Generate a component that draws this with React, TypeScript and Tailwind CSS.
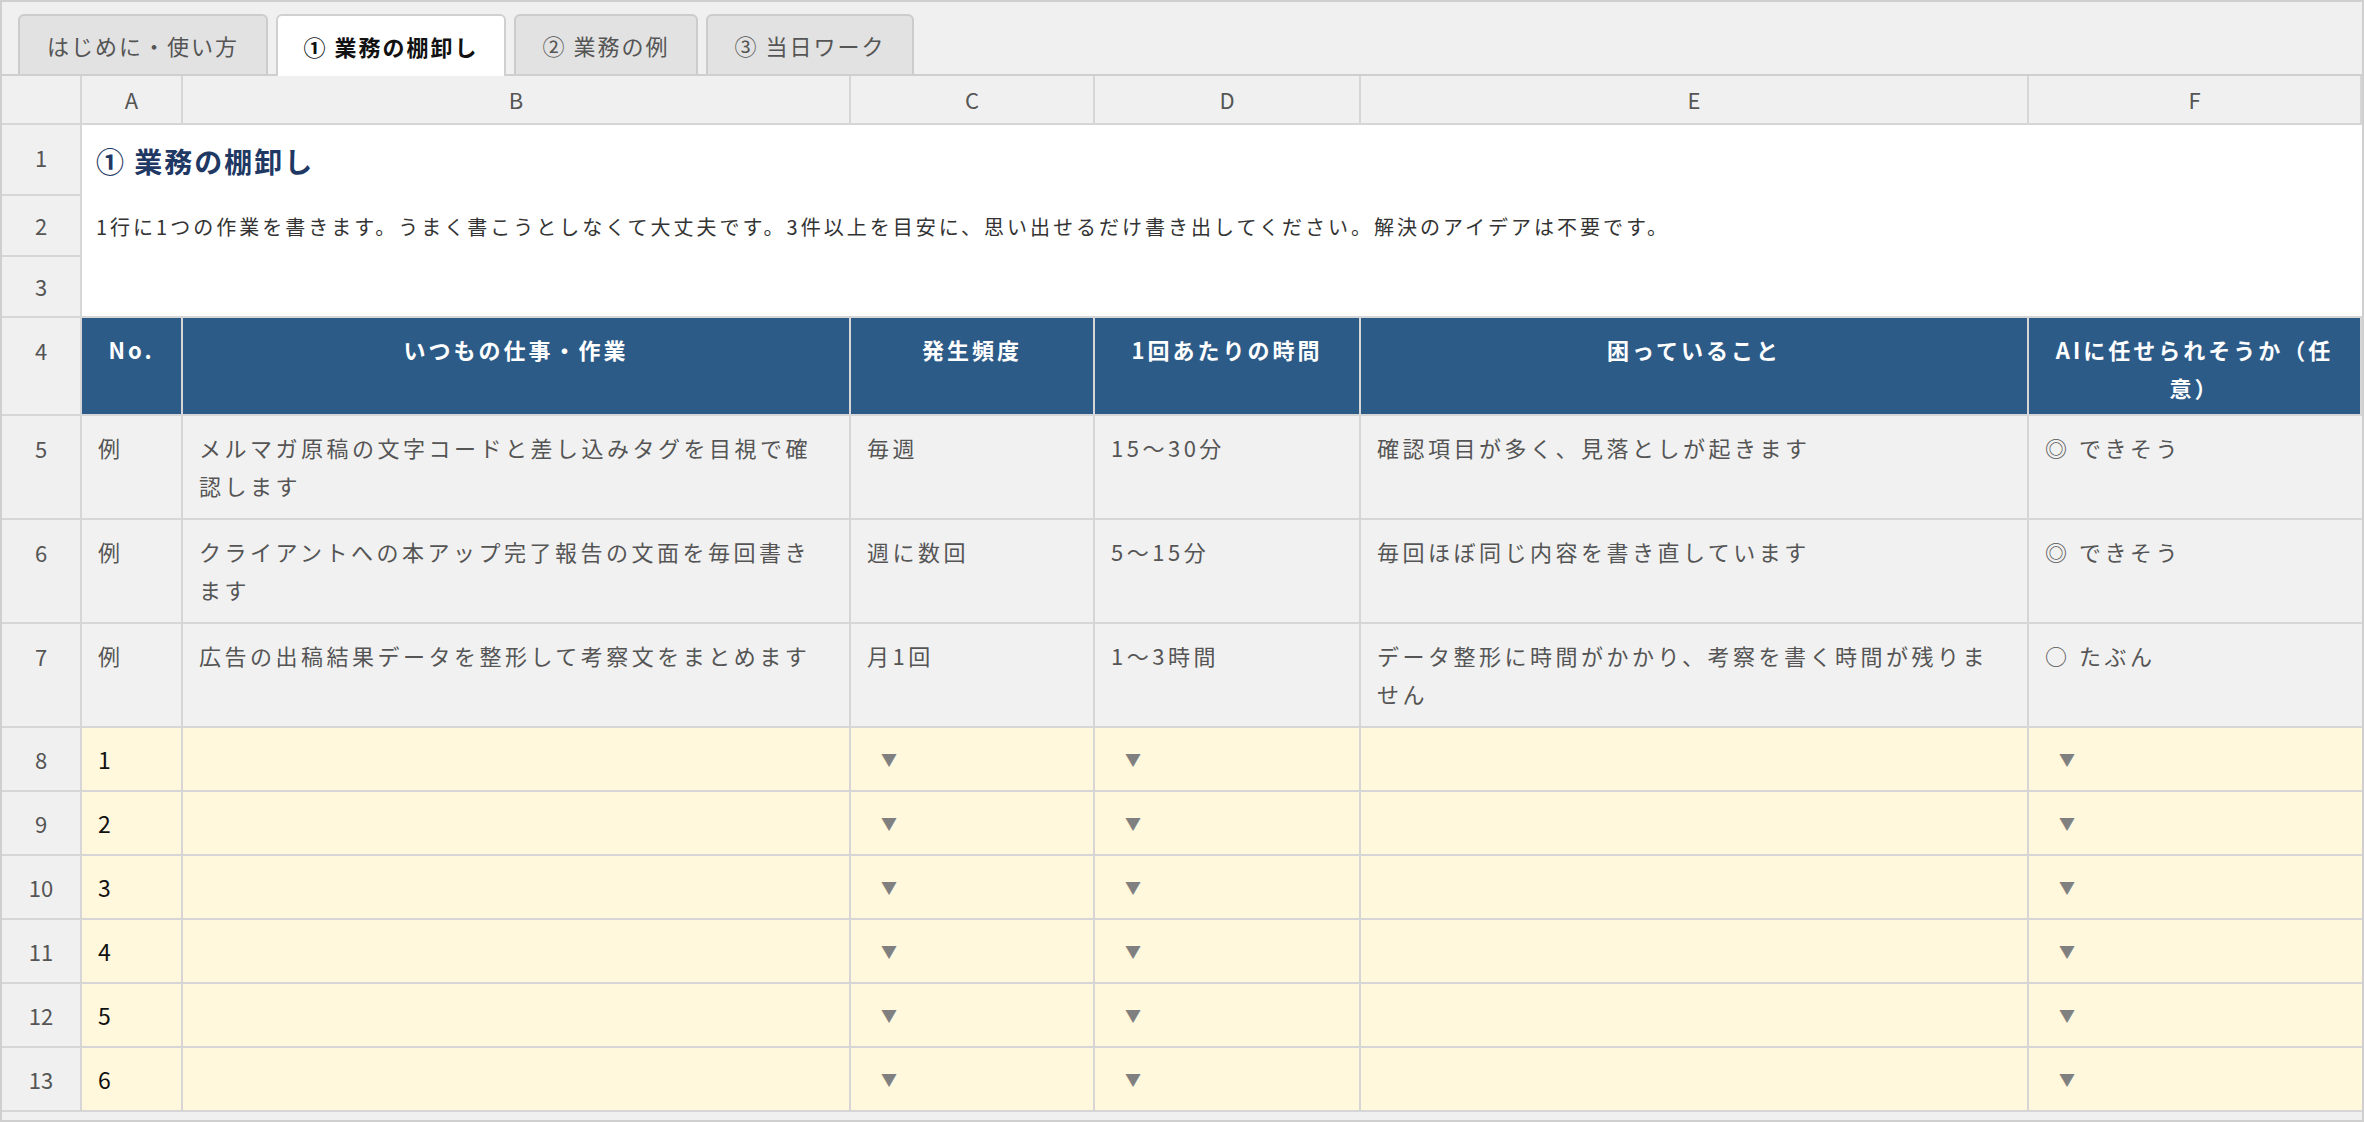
import React from 'react';

const cols = 'grid-cols-[80px_101px_668px_244px_266px_668px_1fr]';
const font = { fontFamily: '"Noto Sans CJK JP", "Noto Sans", sans-serif' };

const tabs = ['はじめに・使い方', '① 業務の棚卸し', '② 業務の例', '③ 当日ワーク'];
const tabWidths = ['w-[250px]', 'w-[230px]', 'w-[184px]', 'w-[208px]'];

const examples = [
  ['5', 'メルマガ原稿の文字コードと差し込みタグを目視で確認します', '毎週', '15〜30分', '確認項目が多く、見落としが起きます', '◎ できそう'],
  ['6', 'クライアントへの本アップ完了報告の文面を毎回書きます', '週に数回', '5〜15分', '毎回ほぼ同じ内容を書き直しています', '◎ できそう'],
  ['7', '広告の出稿結果データを整形して考察文をまとめます', '月1回', '1〜3時間', 'データ整形に時間がかかり、考察を書く時間が残りません', '○ たぶん'],
];

const RowHead: React.FC<{ n: string; h: string; top?: boolean }> = ({ n, h, top }) => (
  <div className={`${h} bg-[#f0f0f0] border-r-2 border-b-2 border-[#d6d6d6] flex justify-center text-[22px] text-[#555] ${top ? 'pt-[16px]' : 'items-center'}`}>{n}</div>
);

const Drop = () => <span className="text-[16px] text-[#808080]">▼</span>;

export default function App() {
  return (
    <div className="w-[2364px] h-[1122px] bg-[#f0f0f0] border-2 border-[#cfcfcf] overflow-hidden" style={font}>
      <div className="flex items-end gap-[8px] pl-[16px] pt-[13px] h-[74px] border-b-2 border-[#cfcfcf]">
        {tabs.map((t, i) => (
          <div
            key={t}
            className={`${tabWidths[i]} h-[60px] flex items-center justify-center rounded-t-[6px] border-2 border-b-0 text-[22px] tracking-[2px] ${
              i === 1 ? 'bg-white border-[#d0d0d0] font-bold text-[#111] -mb-[2px] h-[62px]' : 'bg-[#e2e2e2] border-[#cccccc] text-[#555]'
            }`}
          >
            {t}
          </div>
        ))}
      </div>

      <div className={`grid ${cols}`}>
        {/* column letters */}
        <div className="h-[49px] bg-[#f0f0f0] border-r-2 border-b-2 border-[#d6d6d6]" />
        {['A', 'B', 'C', 'D', 'E', 'F'].map(c => (
          <div key={c} className="h-[49px] bg-[#f0f0f0] border-r-2 border-b-2 border-[#d6d6d6] flex items-center justify-center text-[22px] text-[#555]">{c}</div>
        ))}

        {/* rows 1-3 */}
        <RowHead n="1" h="h-[71px]" top />
        <div className="col-span-6 row-span-3 bg-white border-b-2 border-[#d6d6d6] pl-[14px]">
          <div className="h-[71px] flex items-center text-[28px] tracking-[2px] font-bold text-[#1f3864]">① 業務の棚卸し</div>
          <div className="h-[61px] flex items-center text-[20px] tracking-[3px] text-[#333]">
            1行に1つの作業を書きます。うまく書こうとしなくて大丈夫です。3件以上を目安に、思い出せるだけ書き出してください。解決のアイデアは不要です。
          </div>
        </div>
        <RowHead n="2" h="h-[61px]" />
        <RowHead n="3" h="h-[61px]" />

        {/* header row */}
        <RowHead n="4" h="h-[98px]" top />
        {['No.', 'いつもの仕事・作業', '発生頻度', '1回あたりの時間', '困っていること', 'AIに任せられそうか（任意）'].map(h => (
          <div key={h} className="h-[98px] bg-[#2d5b88] border-r-2 border-b-2 border-[#d6d6d6] text-white font-bold text-[22px] tracking-[3px] leading-[38px] text-center px-[14px] pt-[12px]">{h}</div>
        ))}

        {/* example rows */}
        {examples.map(r => (
          <React.Fragment key={r[0]}>
            <RowHead n={r[0]} h="h-[104px]" top />
            {['例', ...r.slice(1)].map((c, i) => (
              <div key={i} className={`h-[104px] bg-[#f1f1f1] border-b-2 border-[#d6d6d6] px-[16px] pt-[12px] text-[22px] tracking-[3.5px] leading-[38px] text-[#555] ${i < 5 ? 'border-r-2' : ''}`}>{c}</div>
            ))}
          </React.Fragment>
        ))}

        {/* input rows */}
        {[1, 2, 3, 4, 5, 6].map(n => (
          <React.Fragment key={n}>
            <RowHead n={String(n + 7)} h="h-[64px]" />
            <div className="h-[64px] bg-[#fff8dd] border-r-2 border-b-2 border-[#d6d6d6] px-[16px] flex items-center text-[23px] text-[#111]">{n}</div>
            <div className="h-[64px] bg-[#fff8dd] border-r-2 border-b-2 border-[#d6d6d6]" />
            <div className="h-[64px] bg-[#fff8dd] border-r-2 border-b-2 border-[#d6d6d6] pl-[30px] flex items-center"><Drop /></div>
            <div className="h-[64px] bg-[#fff8dd] border-r-2 border-b-2 border-[#d6d6d6] pl-[30px] flex items-center"><Drop /></div>
            <div className="h-[64px] bg-[#fff8dd] border-r-2 border-b-2 border-[#d6d6d6]" />
            <div className="h-[64px] bg-[#fff8dd] border-b-2 border-[#d6d6d6] pl-[30px] flex items-center"><Drop /></div>
          </React.Fragment>
        ))}
      </div>
    </div>
  );
}
